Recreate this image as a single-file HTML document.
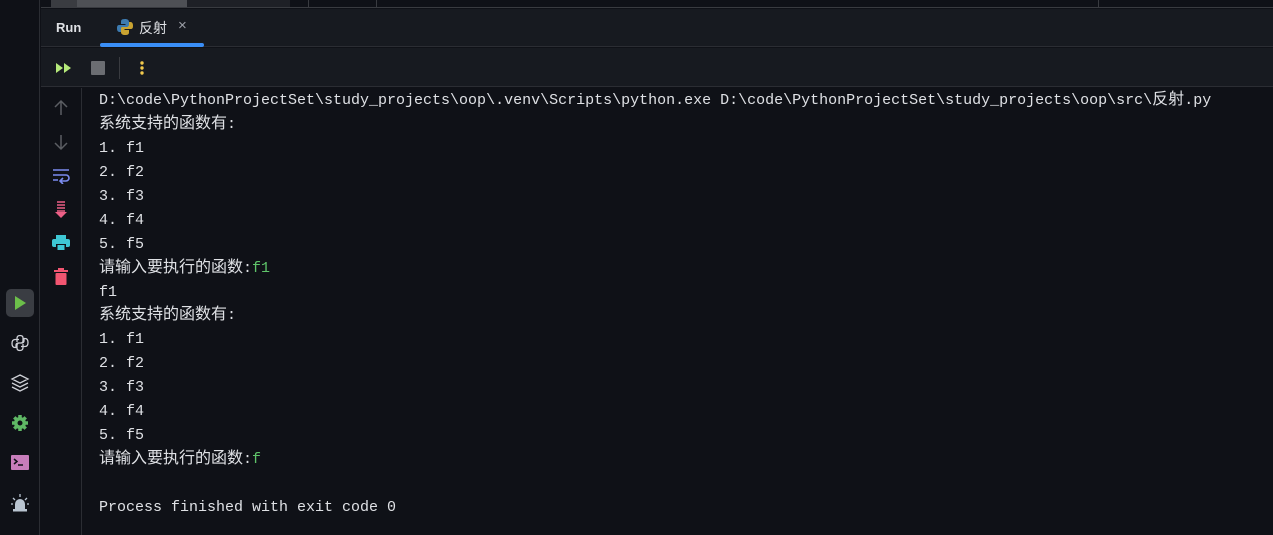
<!DOCTYPE html>
<html><head><meta charset="utf-8"><style>
*{margin:0;padding:0;box-sizing:border-box}
body{width:1273px;height:535px;background:#0f1117;overflow:hidden;position:relative;font-family:"Liberation Sans","Noto Sans CJK SC",sans-serif}
.abs{position:absolute}
.out{position:absolute;left:99px;top:89px;font-family:"Liberation Mono","Noto Sans CJK SC",monospace;font-size:15px;color:#dfe1e5;white-space:pre}
.out div{height:23.95px;line-height:24px;overflow:visible}
.out .c{font-size:16px;line-height:15px}
.g{color:#5fc46a}
</style></head><body>
<div class="abs" style="left:0;top:0;width:40px;height:535px;background:#0f1117;border-right:1px solid #2b2d33"></div>
<div class="abs" style="left:41px;top:0;width:1232px;height:8px;background:#0f1117;border-bottom:1px solid #393b40"></div>
<div class="abs" style="left:51px;top:0;width:26px;height:7px;background:#3a3c41"></div>
<div class="abs" style="left:77px;top:0;width:110px;height:7px;background:#4e5055"></div>
<div class="abs" style="left:187px;top:0;width:103px;height:7px;background:#1e2026"></div>
<div class="abs" style="left:308px;top:0;width:1px;height:8px;background:#393b40"></div>
<div class="abs" style="left:376px;top:0;width:1px;height:8px;background:#393b40"></div>
<div class="abs" style="left:1098px;top:0;width:1px;height:8px;background:#393b40"></div>
<div class="abs" style="left:41px;top:9px;width:1232px;height:38px;background:#171a20;border-bottom:1px solid #2b2d33"></div>
<div class="abs" style="left:56px;top:20px;font-size:13px;font-weight:bold;color:#dfe1e5">Run</div>
<svg class="abs" style="left:116px;top:18px" width="18" height="18" viewBox="0 0 18 18"><path d="M9 1C5 1 5 2.5 5 4v2h4.5v1H3C1 7 1 9 1 10.5S1.5 14 3.5 14H5v-2.5C5 10 6 9 7.5 9h4C13 9 13 8 13 7V4C13 2 11.5 1 9 1z" fill="#3d7bb0"/><path d="M9 17c4 0 4-1.5 4-3v-2H8.5v-1H15c2 0 2-2 2-3.5S16.5 4 14.5 4H13v2.5C13 8 12 9 10.5 9h-4C5 9 5 10 5 11v3c0 2 1.5 3 4 3z" fill="#c9a331"/></svg>
<div class="abs" style="left:139px;top:18px;font-size:14px;color:#dfe1e5">反射</div>
<div class="abs" style="left:178px;top:17px;font-size:15px;color:#9da0a8">×</div>
<div class="abs" style="left:100px;top:43px;width:104px;height:4px;background:#3a8ef6;border-radius:2px"></div>
<div class="abs" style="left:41px;top:48px;width:1232px;height:39px;background:#171a20;border-bottom:1px solid #2b2d33"></div>
<svg class="abs" style="left:56px;top:62px" width="16" height="12" viewBox="0 0 16 12"><path d="M0 1l7 5-7 5zM8 1l7 5-7 5z" fill="#b5e97a"/></svg>
<div class="abs" style="left:91px;top:61px;width:14px;height:14px;background:#6b6d72;border-radius:1px"></div>
<div class="abs" style="left:119px;top:57px;width:1px;height:22px;background:#393b40"></div>
<svg class="abs" style="left:139px;top:60px" width="6" height="16"><circle cx="3" cy="3" r="1.7" fill="#f2c94c"/><circle cx="3" cy="8" r="1.7" fill="#f2c94c"/><circle cx="3" cy="13" r="1.7" fill="#f2c94c"/></svg>
<div class="abs" style="left:81px;top:88px;width:1px;height:447px;background:#2b2d33"></div>
<svg class="abs" style="left:52px;top:99px" width="18" height="18" viewBox="0 0 18 18"><path d="M9 2v14M3 8l6-6 6 6" stroke="#5b5e63" stroke-width="1.5" fill="none"/></svg>
<svg class="abs" style="left:52px;top:133px" width="18" height="18" viewBox="0 0 18 18"><path d="M9 2v14M3 10l6 6 6-6" stroke="#5b5e63" stroke-width="1.5" fill="none"/></svg>
<svg class="abs" style="left:52px;top:168px" width="18" height="16" viewBox="0 0 18 16"><path d="M1 2h16M1 7h13a3 3 0 010 6H9M11 10l-3 3 3 3M1 12h5" stroke="#7b8cf0" stroke-width="1.6" fill="none"/></svg>
<svg class="abs" style="left:53px;top:201px" width="16" height="18" viewBox="0 0 16 18"><path d="M4 1h8M4 4h8M4 7h8M4 10h8" stroke="#ec5f86" stroke-width="1.6"/><path d="M2 11h12l-6 6z" fill="#ec5f86"/></svg>
<svg class="abs" style="left:52px;top:235px" width="18" height="17" viewBox="0 0 18 17"><rect x="4" y="0" width="10" height="4" fill="#3ec7d4"/><rect x="0" y="4" width="18" height="8" rx="2" fill="#3ec7d4"/><rect x="4" y="9" width="10" height="7" fill="#0f1117"/><rect x="5.5" y="10" width="7" height="5" fill="#3ec7d4"/></svg>
<svg class="abs" style="left:54px;top:268px" width="14" height="18" viewBox="0 0 14 18"><rect x="4" y="0" width="6" height="2" fill="#f25571"/><rect x="0" y="2" width="14" height="2" fill="#f25571"/><rect x="1.5" y="5" width="11" height="12" rx="1" fill="#f25571"/></svg>
<div class="abs" style="left:6px;top:289px;width:28px;height:28px;background:#3a3d43;border-radius:5px"></div>
<svg class="abs" style="left:14px;top:296px" width="12" height="14"><path d="M1 0l11 7-11 7z" fill="#6cbf4a"/></svg>
<svg class="abs" style="left:10px;top:333px" width="20" height="20" viewBox="0 0 20 20"><path d="M7 9V5.5C7 3.5 8 2.5 10 2.5s3 1 3 2.5V8c0 1-1 2-2 2H8c-1 0-2 1-2 2v2.5H5c-2 0-3-1.5-3-4s1-4 3-4h4M13 11v3.5c0 2-1 3-3 3s-3-1-3-2.5V12c0-1 1-2 2-2h3c1 0 2-1 2-2V5.5h1c2 0 3 1.5 3 4s-1 4-3 4h-4" stroke="#ced0d6" stroke-width="1.3" fill="none"/></svg>
<svg class="abs" style="left:10px;top:373px" width="20" height="20" viewBox="0 0 20 20"><path d="M10 2l8 4-8 4-8-4zM2 10l8 4 8-4M2 14l8 4 8-4" stroke="#ced0d6" stroke-width="1.3" fill="none"/></svg>
<svg class="abs" style="left:11px;top:414px" width="18" height="18" viewBox="0 0 18 18"><circle cx="9" cy="9" r="6" fill="#5fb865"/><path d="M9 1v16M1 9h16M3.3 3.3l11.4 11.4M14.7 3.3L3.3 14.7" stroke="#5fb865" stroke-width="3.5"/><circle cx="9" cy="9" r="2.5" fill="#0f1117"/></svg>
<svg class="abs" style="left:11px;top:455px" width="18" height="15" viewBox="0 0 18 15"><rect width="18" height="15" rx="1" fill="#c77dbb"/><path d="M3 4l3 2.5-3 2.5" stroke="#0f1117" stroke-width="1.5" fill="none"/><path d="M7 10h5" stroke="#0f1117" stroke-width="1.5"/></svg>
<svg class="abs" style="left:10px;top:493px" width="20" height="20" viewBox="0 0 20 20"><path d="M5 16V11a5 5 0 0110 0v5z" fill="#b9c5d1"/><rect x="3" y="16" width="14" height="2.5" fill="#b9c5d1"/><path d="M10 1v3M3 5l2 2M17 5l-2 2M1 11h2M17 11h2" stroke="#b9c5d1" stroke-width="1.3"/></svg>
<div class="out"><div>D:\code\PythonProjectSet\study_projects\oop\.venv\Scripts\python.exe D:\code\PythonProjectSet\study_projects\oop\src\<span class="c">反射</span>.py</div><div><span class="c">系统支持的函数有</span>:</div><div>1. f1</div><div>2. f2</div><div>3. f3</div><div>4. f4</div><div>5. f5</div><div><span class="c">请输入要执行的函数</span>:<span class="g">f1</span></div><div>f1</div><div><span class="c">系统支持的函数有</span>:</div><div>1. f1</div><div>2. f2</div><div>3. f3</div><div>4. f4</div><div>5. f5</div><div><span class="c">请输入要执行的函数</span>:<span class="g">f</span></div><div> </div><div>Process finished with exit code 0</div></div>
</body></html>
